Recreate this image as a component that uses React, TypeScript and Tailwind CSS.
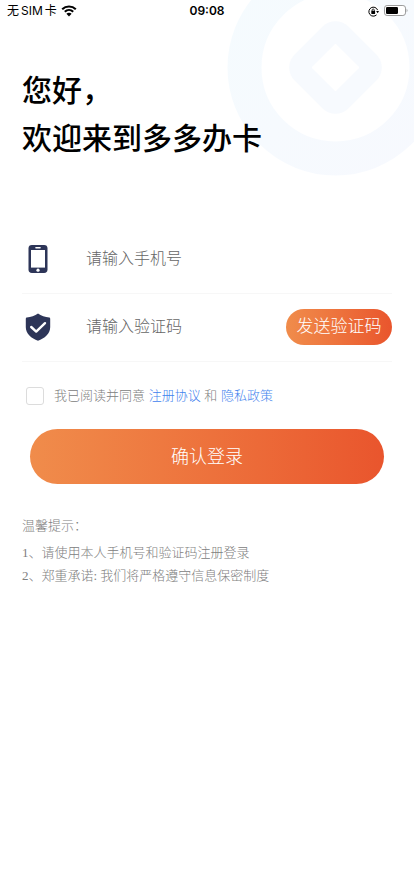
import { useState } from "react";

function StatusBar() {
  return (
    <header className="relative flex h-[22px] items-center justify-between pl-[7px] pr-[6px] text-xs text-black">
      <div className="flex items-center gap-1">
        <span className="flex gap-[2px] font-['Inter','Noto_Sans_CJK_SC',sans-serif]">
          <span>无</span>
          <span>SIM</span>
          <span>卡</span>
        </span>
        <svg className="h-[12px] w-[16px]" viewBox="0 0 16 12" aria-hidden="true">
          <path
            d="M1.2 4.2C5 .5 11 .5 14.8 4.2M3.8 6.7C6.2 4.5 9.8 4.5 12.2 6.7"
            fill="none"
            stroke="black"
            strokeWidth="2.1"
          />
          <path d="M8 11.4 5.4 8.8C6.9 7.5 9.1 7.5 10.6 8.8Z" fill="black" />
        </svg>
      </div>
      <span className="absolute inset-x-0 text-center font-['Inter',sans-serif] font-semibold">
        09:08
      </span>
      <div className="flex items-center gap-[5px]">
        <svg className="size-[11px]" viewBox="0 0 11 11" aria-hidden="true">
          <path
            d="M9.6 4.1A4.5 4.5 0 1 0 8.6 8.8"
            fill="none"
            stroke="black"
            strokeWidth="1"
          />
          <path d="M8.1 5.1H11L9.7 7.2Z" fill="black" />
          <rect x="3.3" y="4.7" width="3.8" height="3.2" rx="0.4" fill="black" />
          <path d="M4.1 5V4.1a1.1 1.1 0 0 1 2.2 0V5" fill="none" stroke="black" strokeWidth="0.8" />
        </svg>
        <svg className="h-[12px] w-[24px]" viewBox="0 0 24 12" aria-hidden="true">
          <rect x="0.5" y="0.5" width="21" height="10" rx="2.6" fill="white" stroke="#9b9b9b" />
          <rect x="2" y="2" width="12" height="7" rx="1.2" fill="black" />
          <path d="M22.6 3.8c1.2.5 1.2 2.9 0 3.4Z" fill="#9b9b9b" />
        </svg>
      </div>
    </header>
  );
}

function CoinBackdrop() {
  return (
    <svg
      className="absolute right-0 top-0 h-[176px] w-[187px]"
      viewBox="0 0 187 176"
      aria-hidden="true"
    >
      <defs>
        <linearGradient id="coin" x1="0" y1="0" x2="1" y2="1">
          <stop offset="0" stopColor="#f5fbfe" />
          <stop offset="1" stopColor="#f7f9fe" />
        </linearGradient>
      </defs>
      <circle cx="108.5" cy="67.5" r="91" fill="none" stroke="url(#coin)" strokeWidth="34" />
      <rect
        x="70.5"
        y="29.5"
        width="76"
        height="76"
        rx="18"
        fill="#f7fafe"
        transform="rotate(45 108.5 67.5)"
      />
      <rect
        x="91.5"
        y="50.5"
        width="34"
        height="34"
        rx="1"
        fill="white"
        transform="rotate(45 108.5 67.5)"
      />
    </svg>
  );
}

function PhoneIcon() {
  return (
    <svg className="h-[28px] w-[20px]" viewBox="0 0 20 28" aria-hidden="true">
      <rect x="0.5" width="19" height="28" rx="3.4" fill="#2d3558" />
      <rect x="3" y="5" width="14" height="17.6" fill="white" />
      <rect x="7.2" y="2" width="5.6" height="1.4" rx="0.7" fill="white" />
      <circle cx="10" cy="25.2" r="1.6" fill="white" />
    </svg>
  );
}

function ShieldIcon() {
  return (
    <svg className="h-[28px] w-[26px]" viewBox="0 0 26 28" aria-hidden="true">
      <path
        d="M13 0.5C16 2.8 20.3 4.3 24.2 4.5Q25.2 4.6 25.2 5.7V14.3C25.2 20.8 19.6 25.6 13 27.7C6.4 25.6 0.8 20.8 0.8 14.3V5.7Q0.8 4.6 1.8 4.5C5.7 4.3 10 2.8 13 0.5Z"
        fill="#2d3558"
      />
      <path
        d="M6.2 14 11.2 18.6 20 10.2"
        fill="none"
        stroke="white"
        strokeWidth="2.4"
        strokeLinecap="round"
        strokeLinejoin="round"
      />
    </svg>
  );
}

export default function App() {
  const [agreed, setAgreed] = useState(false);

  return (
    <div className="relative min-h-screen overflow-hidden bg-white font-['Liberation_Sans','Noto_Sans_CJK_SC',sans-serif]">
      <CoinBackdrop />
      <StatusBar />

      <main className="relative px-[22px] pt-[42px]">
        <h1 className="font-['Noto_Sans_CJK_SC',sans-serif] text-[30px] font-medium leading-[48px] text-black">
          您好，
          <br />
          欢迎来到多多办卡
        </h1>

        <form className="mt-[65px] font-light" onSubmit={(e) => e.preventDefault()}>
          <div className="flex h-[69px] items-center border-b border-[#f7f7f7]">
            <label htmlFor="phone" aria-label="手机号" className="flex w-8 justify-center">
              <PhoneIcon />
            </label>
            <input
              id="phone"
              type="tel"
              placeholder="请输入手机号"
              className="ml-8 min-w-0 flex-1 bg-transparent text-base outline-none placeholder:text-[#666]"
            />
          </div>

          <div className="flex h-[68px] items-center border-b border-[#f7f7f7] pb-[2px]">
            <label htmlFor="code" aria-label="验证码" className="flex w-8 justify-center">
              <ShieldIcon />
            </label>
            <input
              id="code"
              type="text"
              placeholder="请输入验证码"
              className="ml-8 min-w-0 flex-1 bg-transparent text-base outline-none placeholder:text-[#666]"
            />
            <button
              type="button"
              className="h-9 w-[106px] rounded-full bg-linear-to-r from-[#f08c4b] to-[#e9552d] text-[17px] text-white"
            >
              发送验证码
            </button>
          </div>

          <div className="mt-6 flex items-center gap-[10px] pl-1 text-[13px] leading-5 text-[#808080]">
            <input
              id="agree"
              type="checkbox"
              checked={agreed}
              onChange={(e) => setAgreed(e.target.checked)}
              className="size-[18px] appearance-none rounded-[3px] border border-[#dcdcdc] bg-white checked:border-[#e9552d] checked:bg-[#e9552d]"
            />
            <p>
              <label htmlFor="agree">我已阅读并同意</label>{" "}
              <a href="#terms" className="text-[#3f83ee]">注册协议</a> 和{" "}
              <a href="#privacy" className="text-[#3f83ee]">隐私政策</a>
            </p>
          </div>

          <div className="mt-[23px] px-2">
            <button
              type="submit"
              className="h-[55px] w-full rounded-full bg-linear-to-r from-[#f08c4b] to-[#e9552d] text-lg text-white"
            >
              确认登录
            </button>
          </div>
        </form>

        <section className="mt-[30px] font-['Liberation_Serif','Noto_Sans_CJK_SC',serif] text-[13px] font-light leading-[23px] text-[#808080]">
          <h2>温馨提示：</h2>
          <p className="mt-1">1、请使用本人手机号和验证码注册登录</p>
          <p>2、郑重承诺: 我们将严格遵守信息保密制度</p>
        </section>
      </main>
    </div>
  );
}
